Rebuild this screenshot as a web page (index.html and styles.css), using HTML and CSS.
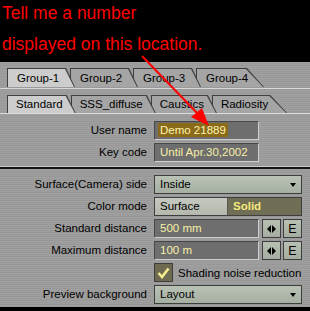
FILE: index.html
```html
<!DOCTYPE html>
<html lang="en">

<head>
    <meta charset="UTF-8" />
    <meta name="viewport" content="width=device-width, initial-scale=1.0" />
    <title>Render Options</title>
    <link rel="stylesheet" href="styles.css">
</head>

<body>
    <div class="window">
        <p class="note">Tell me a number<br>displayed on this location.</p>

        <!-- Registration panel -->
        <div class="panel panel-top">
            <div class="tabs tabs-group">
                <span class="tab active"><span>Group-1</span></span>
                <span class="tab"><span>Group-2</span></span>
                <span class="tab"><span>Group-3</span></span>
                <span class="tab end"><span>Group-4</span></span>
            </div>
            <div class="tabs tabs-sub">
                <span class="tab active"><span>Standard</span></span>
                <span class="tab"><span>SSS_diffuse</span></span>
                <span class="tab"><span>Caustics</span></span>
                <span class="tab end"><span>Radiosity</span></span>
            </div>
            <div class="form">
                <div class="row">
                    <label>User name</label>
                    <div class="field"><span class="selected">Demo 21889</span></div>
                </div>
                <div class="row">
                    <label>Key code</label>
                    <div class="field">Until Apr.30,2002</div>
                </div>
            </div>
        </div>

        <!-- Settings panel -->
        <div class="panel panel-bottom">
            <div class="row">
                <label>Surface(Camera) side</label>
                <div class="dropdown">Inside<i class="caret"></i></div>
            </div>
            <div class="row">
                <label>Color mode</label>
                <div class="toggle">
                    <span class="toggle-off">Surface</span>
                    <span class="toggle-on">Solid</span>
                </div>
            </div>
            <div class="row">
                <label>Standard distance</label>
                <div class="control">
                    <div class="field">500 mm</div>
                    <span class="btn">
                        <svg width="9" height="8" viewBox="0 0 9 8"><polygon points="0,4 4,0 4,8" /><polygon points="5,0 9,4 5,8" /></svg>
                    </span>
                    <span class="btn">E</span>
                </div>
            </div>
            <div class="row">
                <label>Maximum distance</label>
                <div class="control">
                    <div class="field">100 m</div>
                    <span class="btn">
                        <svg width="9" height="8" viewBox="0 0 9 8"><polygon points="0,4 4,0 4,8" /><polygon points="5,0 9,4 5,8" /></svg>
                    </span>
                    <span class="btn">E</span>
                </div>
            </div>
            <div class="row">
                <span></span>
                <div class="check-row">
                    <span class="checkbox">
                        <svg width="13" height="12" viewBox="0 0 13 12"><polyline points="1.5,6 5,10 11.5,1.5" /></svg>
                    </span>
                    Shading noise reduction
                </div>
            </div>
            <div class="row">
                <label>Preview background</label>
                <div class="dropdown">Layout<i class="caret"></i></div>
            </div>
        </div>

        <svg class="pointer" width="310" height="311" viewBox="0 0 310 311">
            <line x1="142" y1="56" x2="199" y2="115" />
            <polygon points="209,126 191,117 202,108" />
        </svg>
    </div>
</body>

</html>
```

FILE: styles.css
```css
body {
    margin: 0;
    padding: 0;
    background-color: #000;
}

.window {
    position: relative;
    width: 310px;
    height: 311px;
    overflow: hidden;
    background-color: #000;
    font-family: "Liberation Sans", Arial, sans-serif;
    font-size: 11.5px;
    color: #000;
}

.note {
    margin: -2px 0 0;
    height: 64px;
    padding-left: 2px;
    color: #f00;
    font-size: 17.5px;
    line-height: 31px;
}

.panel {
    background: repeating-linear-gradient(#a1a1a1 0 1px, #9a9a9a 1px 2px, #9e9e9e 2px 3px, #979797 3px 4px);
}

.panel-top {
    border-bottom: 2px solid #141414;
}

/* Tabs */
.tabs {
    display: flex;
    padding: 6px 0 1px 7px;
    border-bottom: 1px solid #dadada;
}

.tabs-sub {
    padding-bottom: 0;
}

.tab {
    position: relative;
    display: block;
    height: 19px;
    margin-right: -5px;
    background-color: #3f3f3f;
    clip-path: polygon(0 0, calc(100% - 9px) 0, 100% 100%, 0 100%);
}

.tab span {
    display: block;
    height: 18px;
    margin: 1px 1px 0 1px;
    padding: 0 12px 0 8px;
    line-height: 18px;
    background-color: #a5a5a5;
    clip-path: polygon(0 0, calc(100% - 9px) 0, 100% 100%, 0 100%);
    white-space: nowrap;
}

.tab.active span {
    background-color: #cdcdcd;
}

.tab.end {
    clip-path: polygon(0 0, calc(100% - 17px) 0, 100% 100%, 0 100%);
}

.tab.end span {
    padding-right: 18px;
    clip-path: polygon(0 0, calc(100% - 17px) 0, 100% 100%, 0 100%);
}

.tab:nth-child(1) { z-index: 4; }
.tab:nth-child(2) { z-index: 3; }
.tab:nth-child(3) { z-index: 2; }
.tab:nth-child(4) { z-index: 1; }

.tabs-group .tab {
    width: 68px;
}

.tabs-group .tab span {
    padding-left: 9px;
}

.tabs-sub .tab {
    height: 18px;
}

.tabs-sub .tab span {
    height: 17px;
    line-height: 17px;
}

/* Rows */
.form {
    display: flex;
    flex-direction: column;
    gap: 3px;
    padding: 7px 0 4px;
    border-bottom: 1px solid #cdcdcd;
}

.panel-bottom {
    display: flex;
    flex-direction: column;
    gap: 3px;
    padding: 6px 0 3px;
}

.row {
    display: grid;
    grid-template-columns: 147px 148px;
    column-gap: 7px;
    height: 19px;
}

.row label {
    text-align: right;
    line-height: 19px;
    white-space: nowrap;
}

.field {
    box-sizing: border-box;
    width: 105px;
    height: 19px;
    padding-left: 5px;
    line-height: 17px;
    background-color: #6e6e6e;
    color: #f7efa8;
    border: 1px solid;
    border-color: #474747 #cfcfcf #cfcfcf #474747;
    white-space: nowrap;
}

.selected {
    display: inline-block;
    margin-left: -2px;
    padding: 0 2px;
    line-height: 14px;
    background-color: #8a6b1a;
    color: #fff4b0;
}

.dropdown {
    position: relative;
    box-sizing: border-box;
    height: 19px;
    padding-left: 5px;
    line-height: 17px;
    background: linear-gradient(#b9c2b5, #a6b0a2);
    border: 1px solid #3e3e3e;
}

.caret {
    position: absolute;
    right: 5px;
    top: 7px;
    width: 0;
    height: 0;
    border-left: 3.5px solid transparent;
    border-right: 3.5px solid transparent;
    border-top: 4px solid #000;
}

.toggle {
    display: grid;
    grid-template-columns: 1fr 1fr;
    box-sizing: border-box;
    height: 19px;
    border: 1px solid #3e3e3e;
}

.toggle span {
    line-height: 17px;
    padding-left: 5px;
}

.toggle-off {
    background: linear-gradient(#c6c9bf, #b4b8ac);
    border-right: 1px solid #555;
}

.toggle-on {
    background-color: #716e56;
    color: #f4ea7c;
    font-weight: bold;
}

.control {
    display: flex;
    align-items: center;
}

.btn {
    box-sizing: border-box;
    display: flex;
    justify-content: center;
    align-items: center;
    width: 19px;
    height: 19px;
    margin-left: 2px;
    background: linear-gradient(#b8c0b4, #a4ada0);
    border: 1px solid #3e3e3e;
    font-size: 12.5px;
}

.control .field + .btn {
    margin-left: 3px;
}

.btn svg {
    fill: #000;
}

.check-row {
    display: flex;
    align-items: center;
    gap: 5px;
    white-space: nowrap;
}

.checkbox {
    box-sizing: border-box;
    display: flex;
    justify-content: center;
    align-items: center;
    width: 19px;
    height: 19px;
    background-color: #6d6a51;
    border: 1px solid #3e3e3e;
}

.checkbox svg {
    fill: none;
    stroke: #f4ee90;
    stroke-width: 2.6;
}

/* Red annotation arrow over the panel */
.pointer {
    position: absolute;
    left: 0;
    top: 0;
    pointer-events: none;
    z-index: 10;
}

.pointer line {
    stroke: #f00;
    stroke-width: 2;
}

.pointer polygon {
    fill: #f00;
}
```
